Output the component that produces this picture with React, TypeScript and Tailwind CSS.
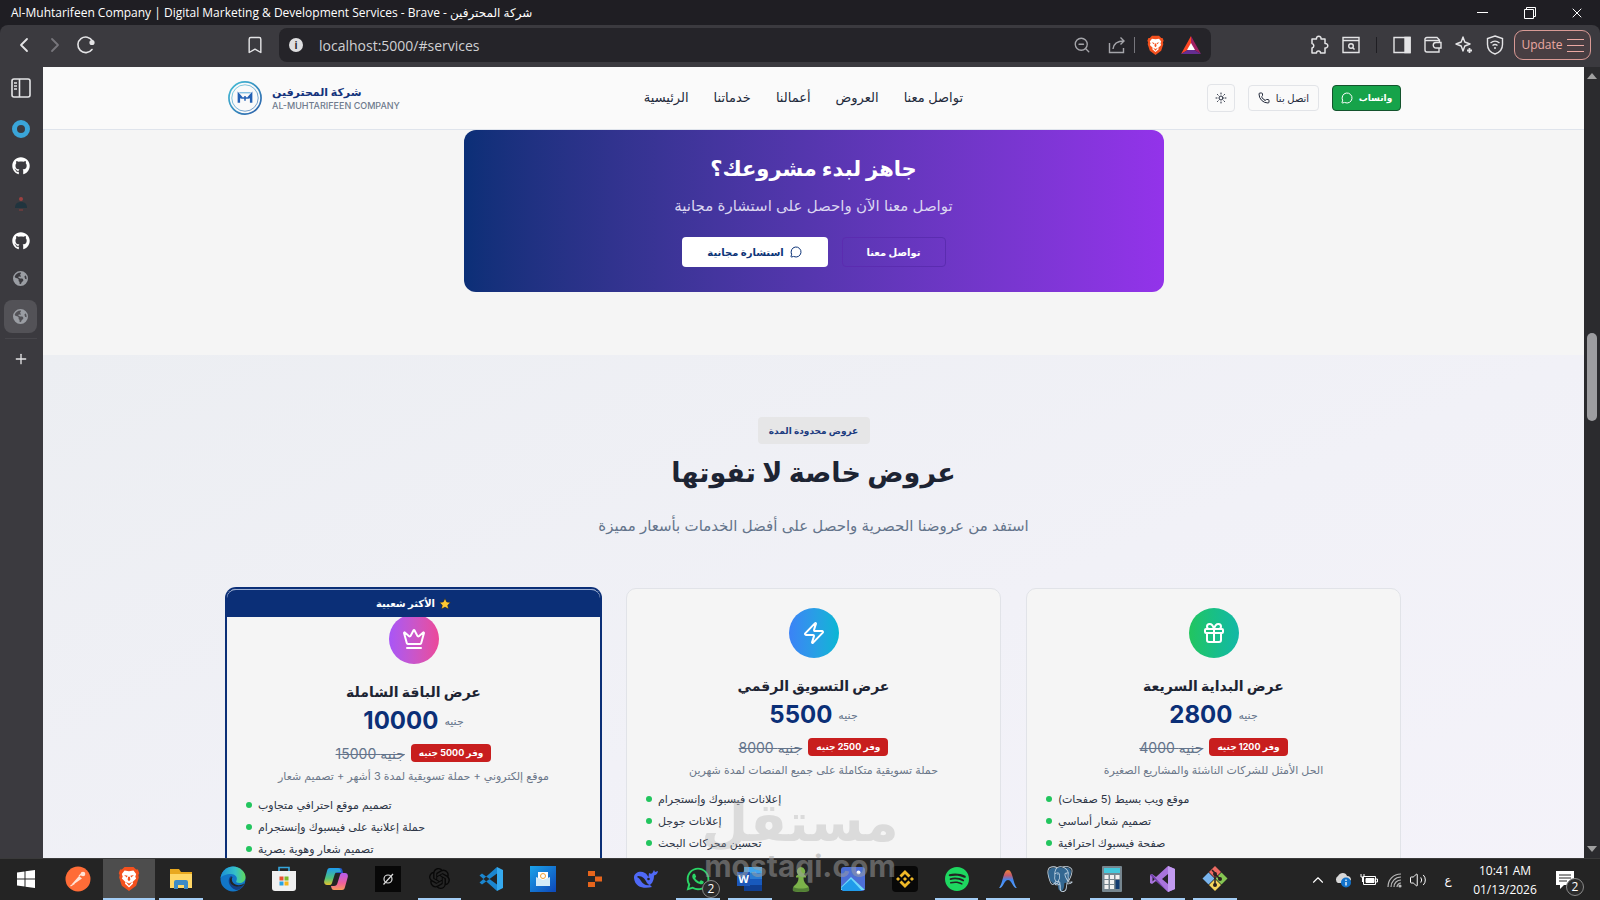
import type { ReactNode } from 'react';
import {
  Bookmark,
  ChevronLeft,
  ChevronRight,
  ChevronUp,
  Crown,
  Gift,
  MessageCircle,
  Phone,
  Plus,
  Sun,
  Volume2,
  X,
  Zap,
  ZoomOut,
} from 'lucide-react';
import { FaGithub, FaWhatsapp } from 'react-icons/fa';
import { FaEarthAmericas } from 'react-icons/fa6';
import { SiBinance, SiOpenai, SiPostgresql, SiPostman, SiSpotify } from 'react-icons/si';

const BraveLion = ({ className }: { className: string }) => (
  <svg viewBox="0 0 24 28" className={className} aria-hidden="true">
    <path d="M7 1h10l3 3 2 0 1.500 4-1 2 .5 3-3 9-8 6-8-6-3-9 .5-3-1-2L2 4l2 0z" fill="#f4511e" />
    <path
      d="M7 5l5 1 5-1 3 4-1 3 1 2-4 4 .5 2L12 24l-4.500-4 .5-2-4-4 1-2-1-3z"
      fill="#fff"
    />
    <path d="M6.500 10l4 1-1 2zM17.500 10l-4 1 1 2zM11 12h2l.5 3.500L12 17l-1.500-1.500zM8.500 18l3.500 1.500 3.500-1.500-3.500 4z" fill="#f4511e" />
  </svg>
);

const tabs = [
  { label: 'Blue ring', icon: <span className="h-[18px] w-[18px] rounded-full border-[5px] border-[#3aa5d8]" /> },
  { label: 'GitHub', icon: <FaGithub className="h-[18px] w-[18px] text-white" /> },
  {
    label: 'Project',
    icon: (
      <svg viewBox="0 0 16 16" className="h-4 w-4">
        <circle cx="8" cy="3" r="2" fill="#9c4040" />
        <path d="M2 12c0-4 2-6 6-6s6 2 6 6z" fill="#20343e" />
        <path d="M6 14h4" stroke="#8f3c3c" />
      </svg>
    ),
  },
  { label: 'GitHub', icon: <FaGithub className="h-[18px] w-[18px] text-white" /> },
  { label: 'Local site', icon: <FaEarthAmericas className="h-[15px] w-[15px] text-[#9a9da3]" /> },
  { label: 'Local site', active: true, icon: <FaEarthAmericas className="h-[15px] w-[15px] text-[#9a9da3]" /> },
];

const navLinks = ['الرئيسية', 'خدماتنا', 'أعمالنا', 'العروض', 'تواصل معنا'];

const offers = [
  {
    title: 'عرض الباقة الشاملة',
    price: '10000',
    oldPrice: '15000 جنيه',
    save: 'وفر 5000 جنيه',
    description: 'موقع إلكتروني + حملة تسويقية لمدة 3 أشهر + تصميم شعار',
    features: ['تصميم موقع احترافي متجاوب', 'حملة إعلانية على فيسبوك وإنستجرام', 'تصميم شعار وهوية بصرية'],
    icon: Crown,
    gradient: 'from-[#a855f7] to-[#ec4899]',
    popular: true,
  },
  {
    title: 'عرض التسويق الرقمي',
    price: '5500',
    oldPrice: '8000 جنيه',
    save: 'وفر 2500 جنيه',
    description: 'حملة تسويقية متكاملة على جميع المنصات لمدة شهرين',
    features: ['إعلانات فيسبوك وإنستجرام', 'إعلانات جوجل', 'تحسين محركات البحث'],
    icon: Zap,
    gradient: 'from-[#3b82f6] to-[#06b6d4]',
    popular: false,
  },
  {
    title: 'عرض البداية السريعة',
    price: '2800',
    oldPrice: '4000 جنيه',
    save: 'وفر 1200 جنيه',
    description: 'الحل الأمثل للشركات الناشئة والمشاريع الصغيرة',
    features: ['موقع ويب بسيط (5 صفحات)', 'تصميم شعار أساسي', 'صفحة فيسبوك احترافية'],
    icon: Gift,
    gradient: 'from-[#22c55e] to-[#14b8a6]',
    popular: false,
  },
];

const TitleBar = () => (
  <div className="flex h-[25px] shrink-0 items-center justify-between bg-[#1f1e23] pl-[11px] text-white">
    <span className="font-['Open_Sans','DejaVu_Sans',sans-serif] text-[12px]">
      Al-Muhtarifeen Company | Digital Marketing &amp; Development Services - Brave - شركة المحترفين
    </span>
    <div className="flex h-full">
      <button aria-label="Minimize" className="flex w-[47px] items-center justify-center">
        <span className="h-px w-[11px] bg-white" />
      </button>
      <button aria-label="Restore" className="flex w-[47px] items-center justify-center">
        <svg viewBox="0 0 12 12" className="h-3 w-3" fill="none" stroke="#fff">
          <path d="M.5 2.500h9v9h-9zM2.500 2V.5h9v9H10" />
        </svg>
      </button>
      <button aria-label="Close" className="flex w-[47px] items-center justify-center">
        <X className="h-4 w-4" strokeWidth={1.5} />
      </button>
    </div>
  </div>
);

const Toolbar = () => (
  <div className="flex h-[42px] shrink-0 items-center rounded-t-lg bg-[#3b3a3f] pb-0.5 font-['Open_Sans',sans-serif] text-[#e4e4e6]">
    <div className="flex w-[279px] shrink-0 items-center pl-2">
      <button aria-label="Back" className="flex w-[31px] justify-center">
        <ChevronLeft className="h-6 w-6" strokeWidth={1.8} />
      </button>
      <button aria-label="Forward" className="flex w-[31px] justify-center text-[#77767c]">
        <ChevronRight className="h-6 w-6" strokeWidth={1.8} />
      </button>
      <button aria-label="Reload" className="flex w-[31px] justify-center">
        <svg viewBox="0 0 20 20" className="h-5 w-5" fill="none" stroke="currentColor" strokeWidth="1.6">
          <path d="M16 14.500A7.800 7.800 0 1 1 16.500 6" strokeLinecap="round" />
          <circle cx="16" cy="7.500" r="1.800" fill="currentColor" />
        </svg>
      </button>
      <button aria-label="Bookmark" className="ml-auto flex w-12 justify-center">
        <Bookmark className="h-5 w-5" strokeWidth={1.7} />
      </button>
    </div>

    <div className="flex h-[34px] min-w-0 flex-1 items-center rounded-lg bg-[#252429] pr-1">
      <span className="ml-2.5 flex h-[14px] w-[14px] shrink-0 items-center justify-center rounded-full bg-[#dedee0] text-[10px] leading-none font-bold text-[#252429]">
        i
      </span>
      <input
        aria-label="Address"
        defaultValue="localhost:5000/#services"
        className="ml-4 min-w-0 flex-1 bg-transparent text-[14px] text-[#d0d0d3] outline-none"
      />
      <button aria-label="Zoom out" className="flex w-9 justify-center text-[#a5a5aa]">
        <ZoomOut className="h-[18px] w-[18px]" strokeWidth={1.8} />
      </button>
      <button aria-label="Share" className="flex w-[34px] justify-center text-[#a5a5aa]">
        <svg viewBox="0 0 18 18" className="h-[18px] w-[18px]" fill="none" stroke="currentColor" strokeWidth="1.400">
          <path d="M1.500 7v9.500h14V12M5 13c.5-5 3-8 11-8M12.500 1.500L16 5l-3.500 3.500" />
        </svg>
      </button>
      <span className="h-4 w-px bg-[#77767c]" />
      <button aria-label="Brave Shields" className="flex w-10 justify-center">
        <BraveLion className="h-5 w-[17px]" />
      </button>
      <button aria-label="Brave Rewards" className="flex w-8 justify-center">
        <svg viewBox="0 0 20 18" className="h-[18px] w-5">
          <path d="M10 0L0 18l10-6z" fill="#ff4724" />
          <path d="M10 0l10 18-10-6z" fill="#9e1f63" />
          <path d="M0 18h20l-10-6z" fill="#662d91" />
          <path d="M10 7l-4 7h8z" fill="#fff" />
        </svg>
      </button>
    </div>

    <div className="flex w-[389px] shrink-0 items-center justify-end pr-[9px]">
      <button aria-label="Extensions" className="flex w-8 justify-center">
        <svg viewBox="0 0 20 20" className="h-5 w-5" fill="none" stroke="currentColor" strokeWidth="1.500" strokeLinejoin="round">
          <path d="M3 4h4.500a2.300 2.300 0 1 1 4.500 0h4v4.500a2.300 2.300 0 1 1 0 4.500v5h-4.500a2 2 0 0 0-4 0H3v-5a2.300 2.300 0 0 0 0-4.500z" />
        </svg>
      </button>
      <button aria-label="Search tabs" className="flex w-8 justify-center">
        <svg viewBox="0 0 18 18" className="h-[18px] w-[18px]" fill="none" stroke="currentColor" strokeWidth="1.400">
          <path d="M1 1.500h16v15H1zM1 4.500h16" />
          <circle cx="9" cy="10" r="2.300" />
          <path d="M10.500 11.500l2 2" />
        </svg>
      </button>
      <span className="mx-[9px] h-4 w-px bg-[#1f1e23]" />
      <button aria-label="Sidebar" className="flex w-[31px] justify-center">
        <svg viewBox="0 0 18 18" className="h-[18px] w-[18px]" fill="none" stroke="currentColor" strokeWidth="1.400">
          <path d="M1 1.500h16v15H1z" />
          <path d="M12 1.500h5v15h-5z" fill="currentColor" />
        </svg>
      </button>
      <button aria-label="Wallet" className="flex w-[31px] justify-center">
        <svg viewBox="0 0 18 18" className="h-[18px] w-[18px]" fill="none" stroke="currentColor" strokeWidth="1.400">
          <path d="M15.500 6V4L13 1.500H3A2 2 0 0 0 1 4v10a2 2 0 0 0 2 2h12V12M1 4.500h14.500" />
          <path d="M17 6.500h-5a2.700 2.700 0 0 0 0 5.500h5z" />
        </svg>
      </button>
      <button aria-label="Leo AI" className="flex w-[31px] justify-center">
        <svg viewBox="0 0 18 18" className="h-[18px] w-[18px]" fill="none" stroke="currentColor" strokeWidth="1.400">
          <path d="M8 1l1.800 5L15 8l-5.200 2L8 15l-1.800-5L1 8l5.200-2z" strokeLinejoin="round" />
          <path d="M14.500 12v5M12 14.500h5" strokeWidth="1.800" />
        </svg>
      </button>
      <button aria-label="VPN" className="mr-1 flex w-[31px] justify-center">
        <svg viewBox="0 0 18 20" className="h-5 w-[18px]" fill="none" stroke="currentColor" strokeWidth="1.400">
          <path d="M9 1l7.500 2.500v6c0 5-3 8-7.500 9.500C4.500 17.500 1.500 14.500 1.500 9.500v-6z" />
          <path d="M4.500 8c3-2.500 6-2.500 9 0M6.500 10.500c2-1.500 3-1.500 5 0" />
          <circle cx="9" cy="13" r="1" fill="currentColor" stroke="none" />
        </svg>
      </button>
      <button className="flex h-[30px] w-[77px] items-center justify-center gap-1 rounded-[9px] border border-[#d99a95] bg-[#483e42] text-[12px] text-[#eba9a3]">
        Update
        <span className="flex w-[17px] flex-col gap-[5px]">
          <span className="h-px bg-[#eba9a3]" />
          <span className="h-px bg-[#eba9a3]" />
          <span className="h-px bg-[#eba9a3]" />
        </span>
      </button>
    </div>
  </div>
);

const Sidebar = () => (
  <aside className="flex w-[43px] shrink-0 flex-col items-center bg-[#3b3a3f] pr-0.5 text-[#e4e4e6]">
    <button aria-label="Toggle tabs" className="mt-[11px] flex h-8 w-8 items-start justify-center">
      <svg viewBox="0 0 20 20" className="h-5 w-5" fill="none" stroke="currentColor" strokeWidth="1.600">
        <rect x="1" y="1" width="18" height="18" rx="2" />
        <path d="M8.500 1v18" />
        <path d="M3 5h3M3 8h3M3 11h3" />
      </svg>
    </button>
    <div className="flex h-[225px] flex-col">
      {tabs.map((tab, i) => (
        <div key={i} className="flex flex-1 items-center">
          <button
            aria-label={tab.label}
            className={`flex h-[33px] w-[33px] items-center justify-center rounded-lg ${tab.active ? 'bg-[#535257]' : ''}`}
          >
            {tab.icon}
          </button>
        </div>
      ))}
    </div>
    <hr className="mt-[3px] w-8 border-[#47464b]" />
    <button aria-label="New tab" className="mt-3 flex justify-center">
      <Plus className="h-4 w-4" strokeWidth={2} />
    </button>
  </aside>
);

const SiteHeader = () => (
  <header className="h-[63px] border-b border-[#dfe4ec] bg-[#fafafa]">
    <div className="mx-auto flex h-full w-full max-w-[1175px] items-center justify-between">
      <a href="#home" className="flex items-center gap-2.5">
        <svg viewBox="0 0 36 36" className="ml-0.5 h-[34px] w-[34px]" fill="none">
          <defs>
            <linearGradient id="ring" x1="0" y1="0" x2="1" y2="1">
              <stop offset="0" stopColor="#45c1d8" />
              <stop offset="1" stopColor="#2b5ca8" />
            </linearGradient>
          </defs>
          <circle cx="18" cy="18" r="17" stroke="url(#ring)" strokeWidth="1.800" />
          <circle cx="18" cy="18" r="14" stroke="url(#ring)" strokeWidth=".7" />
          <path d="M11.500 23v-8.500l3 3.500M24.500 23v-8.500l-3 3.500" stroke="#2461b5" strokeWidth="2.600" />
          <path d="M14 18h8M18 16v5" stroke="#2461b5" strokeWidth="1.600" />
          <path d="M12 12.500h12" stroke="#4ba3d6" />
        </svg>
        <span className="flex flex-col">
          <span className="text-[11px] leading-4 font-bold text-[#13337c]">شركة المحترفين</span>
          <span className="text-[9px] leading-3 font-medium text-[#6f7a8d]">AL-MUHTARIFEEN COMPANY</span>
        </span>
      </a>
      <nav className="flex gap-[25px] text-[13px] font-medium text-[#22293a]">
        {navLinks.map((link) => (
          <a key={link} href="#services">
            {link}
          </a>
        ))}
      </nav>
      <div className="flex items-center gap-[13px] text-[10px] font-medium">
        <button
          aria-label="Toggle theme"
          className="flex h-7 w-7 items-center justify-center rounded border border-[#e2e4e8]"
        >
          <Sun className="h-3 w-3 text-[#22293a]" />
        </button>
        <button className="flex h-[26px] w-[71px] items-center justify-center gap-1.5 rounded border border-[#e2e4e8] text-[#22293a]">
          <Phone className="h-3 w-3" />
          اتصل بنا
        </button>
        <button className="flex h-[26px] w-[69px] items-center justify-center gap-1.5 rounded border border-[#14532d] bg-[#16a34a] text-[9px] font-bold text-white">
          <MessageCircle className="h-3 w-3" />
          واتساب
        </button>
      </div>
    </div>
  </header>
);

const CallToAction = () => (
  <section className="bg-[#f5f5f5] pb-[63px]">
    <div className="mx-auto flex h-[162px] w-full max-w-[700px] flex-col items-center rounded-xl bg-linear-to-r from-[#0b2f77] to-[#9333ea] pt-[23px] text-white">
      <h2 className="text-[21px] leading-8 font-bold">جاهز لبدء مشروعك؟</h2>
      <p className="mt-[9px] text-[15px] leading-6 text-[#dad5f0]">تواصل معنا الآن واحصل على استشارة مجانية</p>
      <div className="mt-[19px] flex gap-3.5 text-[10px] font-bold">
        <button className="flex h-[30px] w-[146px] items-center justify-center gap-1.5 rounded bg-white text-[#0d3478]">
          استشارة مجانية
          <MessageCircle className="h-3 w-3" />
        </button>
        <button className="h-[30px] w-[104px] rounded border border-[#5b2cb0]">تواصل معنا</button>
      </div>
    </div>
  </section>
);

const OfferCard = ({ offer }: { offer: (typeof offers)[number] }) => {
  const Icon = offer.icon;

  return (
    <article
      className={`relative flex h-[420px] flex-col items-center rounded-[10px] border bg-[#f5f5f5] ${
        offer.popular ? 'border-[#0b2f77] pt-[25px] ring-1 ring-[#0b2f77]' : 'border-[#e1e3e8] pt-[19px]'
      }`}
    >
      <div className={`flex h-[50px] w-[50px] items-center justify-center rounded-full bg-linear-to-r ${offer.gradient}`}>
        <Icon className="h-6 w-6 text-white" />
      </div>
      {offer.popular && (
        <div className="absolute inset-x-0 top-0 flex h-7 items-center justify-center gap-1 rounded-t-[9px] border-t border-[#9db0d4] bg-[#0b2f77] text-[10px] font-bold text-white">
          الأكثر شعبية
          <svg viewBox="0 0 12 12" className="h-3 w-3">
            <path d="M6 .5l1.700 3.500 3.800.5-2.800 2.600.7 3.900L6 9.100 2.600 11l.7-3.900L.5 4.500 4.300 4z" fill="#ffc933" stroke="#222" strokeWidth=".5" />
          </svg>
        </div>
      )}
      <h3 className="mt-3.5 text-[14px] leading-7 font-bold text-[#1d2433]">{offer.title}</h3>
      <div className="flex h-[30px] items-center gap-1.5">
        <span className="text-[24px] leading-none font-bold text-[#0b2f77]">{offer.price}</span>
        <span className="text-[11px] text-[#64748b]">جنيه</span>
      </div>
      <div className="mt-2 flex h-[18px] items-center gap-1.5">
        <s className="text-[14px] text-[#64748b]">{offer.oldPrice}</s>
        <span className="flex h-[18px] items-center rounded bg-[#c81e1e] px-2 text-[9px] font-bold text-white">
          {offer.save}
        </span>
      </div>
      <p className="mt-1 text-[11px] leading-5 text-[#6b7789]">{offer.description}</p>
      <ul className="mt-2 self-stretch pl-[19px] text-[11px] leading-[22px] text-[#2c3445]">
        {offer.features.map((feature) => (
          <li key={feature} className="flex items-center gap-1.5">
            <span className="h-1.5 w-1.5 rounded-full bg-[#22c55e]" />
            {feature}
          </li>
        ))}
      </ul>
    </article>
  );
};

const Offers = () => (
  <section className="bg-linear-to-br from-[#eceef2] via-[#f1f1f7] to-[#f5f3fa] pt-[62px]">
    <div className="mx-auto flex w-full max-w-[1175px] flex-col items-center">
      <span className="flex h-[27px] w-[112px] items-center justify-center rounded bg-[#e6e6e7] text-[9px] font-bold text-[#1d3c80]">
        عروض محدودة المدة
      </span>
      <h2 className="mt-2 text-[27px] leading-[42px] font-bold text-[#1d2433]">عروض خاصة لا تفوتها</h2>
      <p className="mt-5 text-[15px] leading-6 text-[#64748b]">
        استفد من عروضنا الحصرية واحصل على أفضل الخدمات بأسعار مميزة
      </p>
      <div className="mt-[50px] grid w-full grid-cols-3 gap-[25px]">
        {offers.map((offer) => (
          <OfferCard key={offer.title} offer={offer} />
        ))}
      </div>
    </div>
  </section>
);

const Scrollbar = () => (
  <div className="flex w-4 shrink-0 flex-col items-center justify-between bg-[#2b2b2e] py-1.5 text-[#a0a0a0]">
    <svg viewBox="0 0 10 6" className="h-1.5 w-2.5" fill="currentColor">
      <path d="M5 0l5 6H0z" />
    </svg>
    <div className="mt-[254px] mb-auto h-[88px] w-2.5 rounded-full bg-[#9d9da0]" />
    <svg viewBox="0 0 10 6" className="h-1.5 w-2.5" fill="currentColor">
      <path d="M0 0h10L5 6z" />
    </svg>
  </div>
);

type TaskbarApp = { name: string; icon: ReactNode; open?: boolean; active?: boolean; count?: number };

const apps: TaskbarApp[] = [
  {
    name: 'Start',
    icon: (
      <svg viewBox="0 0 18 18" className="h-[18px] w-[18px]" fill="#fff">
        <path d="M0 2.500l7.500-1v7H0zM8.500 1.300L18 0v8.500H8.500zM0 9.500h7.500v7l-7.500-1zM8.500 9.500H18V18l-9.500-1.300z" />
      </svg>
    ),
  },
  {
    name: 'Postman',
    icon: (
      <svg viewBox="0 0 26 26" className="h-[26px] w-[26px]">
        <circle cx="13" cy="13" r="12.500" fill="#ff6c37" />
        <path d="M7 18l7-8 3 2.500-8 5.500z" fill="#ffe3d6" />
        <path d="M5.500 20l4-2.500M14 10l3.500-3" stroke="#ffe3d6" strokeWidth="1.300" />
        <circle cx="18" cy="8" r="2.300" fill="#ffe3d6" />
      </svg>
    ),
  },
  { name: 'Brave', active: true, open: true, icon: <BraveLion className="h-[25px] w-[22px]" /> },
  {
    name: 'File Explorer',
    open: true,
    icon: (
      <svg viewBox="0 0 24 22" className="h-[22px] w-6">
        <path d="M1 1h9l2 3h11v16H1z" fill="#e8a81f" />
        <path d="M1 6h22v14H1z" fill="#ffd766" />
        <path d="M5 21v-7a2 2 0 0 1 2-2h10a2 2 0 0 1 2 2v7h-4v-4H9v4z" fill="#3c8ac6" />
      </svg>
    ),
  },
  {
    name: 'Edge',
    icon: (
      <svg viewBox="0 0 26 26" className="h-[26px] w-[26px]">
        <defs>
          <linearGradient id="edge" x1="0" x2="1">
            <stop offset="0" stopColor="#1b8fd8" />
            <stop offset=".6" stopColor="#35c1c8" />
            <stop offset="1" stopColor="#5fd85a" />
          </linearGradient>
        </defs>
        <circle cx="13" cy="13" r="12.500" fill="#1276c8" />
        <path d="M.5 12C2 4 8 .5 13 .5 20 .5 25.500 6 25.500 11c0 4-3 6-6 6-3 0-4-1-3-2.500C18 11 15 8 11 8 6 8 2 10 .5 12z" fill="url(#edge)" />
        <path d="M11 10c-4 3-3 11 5 14 3 0 6-2 8-5-6 3-13 0-13-5 0-1 .5-2 1.500-3z" fill="#143f85" />
        <path d="M12.500 11c-1.500 2-.5 6 3 7.500 2.500 1 6 1 8.500-1 .5 0-.5 1.500-1 2-7 3-14-1-13-6 .5-1.500 1.500-2.500 2.500-2.500z" fill="#242424" />
      </svg>
    ),
  },
  {
    name: 'Microsoft Store',
    icon: (
      <svg viewBox="0 0 24 26" className="h-[26px] w-6">
        <path d="M7 5V1.500h10V5" fill="none" stroke="#35a6dc" strokeWidth="1.600" />
        <path d="M0 5h24v17a3 3 0 0 1-3 3H3a3 3 0 0 1-3-3z" fill="#f0f0f0" />
        <path d="M7.500 10.500h4v4h-4z" fill="#e8502f" />
        <path d="M12.500 10.500h4v4h-4z" fill="#7db928" />
        <path d="M7.500 15.500h4v4h-4z" fill="#28a3e2" />
        <path d="M12.500 15.500h4v4h-4z" fill="#f6b519" />
      </svg>
    ),
  },
  {
    name: 'Copilot',
    icon: (
      <svg viewBox="0 0 24 24" className="h-6 w-6">
        <defs>
          <linearGradient id="copilotA" x1="0" y1="0" x2="0" y2="1">
            <stop offset="0" stopColor="#1e9bf0" />
            <stop offset=".6" stopColor="#4fc37c" />
            <stop offset="1" stopColor="#e5c22c" />
          </linearGradient>
          <linearGradient id="copilotB" x1="0" y1="0" x2="0" y2="1">
            <stop offset="0" stopColor="#b45cf0" />
            <stop offset=".6" stopColor="#f0609a" />
            <stop offset="1" stopColor="#f79a5c" />
          </linearGradient>
        </defs>
        <path d="M13 1h3c2 0 2.500 1.500 3 5h-7z" fill="#2457c9" />
        <path d="M6 1h8c2 0 2.500 1.500 3 4h-3c-2 0-3 1-3.500 3L8 16c-.5 1.500-1 2-3 2H3c-2.500 0-3.500-2-2.500-5L3 4c.5-2 1-3 3-3z" fill="url(#copilotA)" />
        <path d="M18 23h-8c-2 0-2.500-1.500-3-4h3c2 0 3-1 3.500-3L16 8c.5-1.500 1-2 3-2h2c2.500 0 3.500 2 2.500 5L21 20c-.5 2-1 3-3 3z" fill="url(#copilotB)" />
      </svg>
    ),
  },
  {
    name: 'Grok',
    icon: (
      <svg viewBox="0 0 26 26" className="h-[26px] w-[26px]">
        <path d="M0 0h26v26H0z" fill="#080808" />
        <circle cx="13" cy="13" r="4" fill="none" stroke="#ddd" strokeWidth="1.200" />
        <path d="M8.500 18.500L18 8" stroke="#ddd" strokeWidth="1.200" />
      </svg>
    ),
  },
  { name: 'ChatGPT', open: true, icon: <SiOpenai className="h-[21px] w-[21px] text-[#080808]" /> },
  {
    name: 'VS Code',
    icon: (
      <svg viewBox="0 0 26 26" className="h-[26px] w-[26px]">
        <path d="M19 1l6 3v18l-6 3z" fill="#35a9ee" />
        <path d="M19 1L1.500 16.500l2.500 2L19 7.500zM19 25L1.500 9.500l2.500-2L19 18.500z" fill="#1b86cf" />
      </svg>
    ),
  },
  {
    name: 'Mail box',
    icon: (
      <svg viewBox="0 0 26 26" className="h-[26px] w-[26px]">
        <defs>
          <linearGradient id="box" x1="0" y1="0" x2="1" y2="1">
            <stop offset="0" stopColor="#1ba3ea" />
            <stop offset="1" stopColor="#0d47b8" />
          </linearGradient>
        </defs>
        <path d="M0 0h26v26H0z" fill="url(#box)" />
        <path d="M8 6h10v8H8z" fill="#fff" />
        <circle cx="13" cy="10" r="2.500" fill="none" stroke="#f0a030" />
        <path d="M6 11l7 3 7-3v9H6z" fill="#d3ebf8" />
      </svg>
    ),
  },
  {
    name: 'Replit',
    icon: (
      <svg viewBox="0 0 14 16" className="h-4 w-3.5" fill="#e7651c">
        <path d="M0 0h7v5H0zM7 5.500h7v5H7zM0 11h7v5H0z" />
      </svg>
    ),
  },
  {
    name: 'DeepSeek',
    icon: (
      <svg viewBox="0 0 24 20" className="h-5 w-6">
        <path d="M15 4c2 1 3 1 4-1l1-2 1 2 3-1c-.5 3-2 4-4 4.500 0 5-2 8-4 9.500l2 2c-7 2-17 1-18-9C-.5 4 6 1 11 4c2 1 2 2 3.500 4z" fill="#4f69f6" />
        <path d="M4 7c5 0 7 3 9 7 1 1 2 2 3 2-4 1-7-1-9-4-1-2-2-3-4-4z" fill="#242424" />
        <circle cx="14.500" cy="10" r="1.300" fill="#242424" />
      </svg>
    ),
  },
  { name: 'WhatsApp', open: true, count: 2, icon: <FaWhatsapp className="h-[26px] w-[26px] text-[#2bd566]" /> },
  {
    name: 'Word',
    open: true,
    icon: (
      <svg viewBox="0 0 25 24" className="h-6 w-[25px]">
        <path d="M7 0h18v6H7z" fill="#41a5ee" />
        <path d="M7 6h18v6H7z" fill="#2b7cd3" />
        <path d="M7 12h18v6H7z" fill="#185abd" />
        <path d="M7 18h18v6H7z" fill="#103f91" />
        <path d="M0 5h13v14H0z" fill="#1d57b8" />
        <text x="6.500" y="16" fontSize="11" fontWeight="700" fill="#fff" textAnchor="middle">W</text>
      </svg>
    ),
  },
  {
    name: 'Chess',
    icon: (
      <svg viewBox="0 0 18 26" className="h-[26px] w-[18px]">
        <path d="M9 1a4.500 4.500 0 0 1 3 7.500l2 1.500v1.500h-2.500c0 4 1.500 6 4 8 1.500 1.500 2 3 1.500 5.500-5 1.500-11 1.500-16 0-.5-2.500 0-4 1.500-5.500 2.500-2 4-4 4-8H4V10l2-1.500A4.500 4.500 0 0 1 9 1z" fill="#7bb24a" />
        <path d="M1 21c5 2 11 2 16 0v4c-5 1.300-11 1.300-16 0z" fill="#538136" />
      </svg>
    ),
  },
  {
    name: 'Photos',
    icon: (
      <svg viewBox="0 0 24 24" className="h-6 w-6">
        <rect width="24" height="24" rx="3" fill="#4d6fd6" />
        <path d="M0 20L10 10l14 13H0z" fill="#6fd8fa" />
        <path d="M0 21l10-9 11 12H2z" fill="#209bea" />
        <circle cx="17.500" cy="5.500" r="2" fill="#fff" />
      </svg>
    ),
  },
  {
    name: 'Binance',
    icon: (
      <span className="flex h-[26px] w-[26px] items-center justify-center rounded bg-[#080808]">
        <SiBinance className="h-[18px] w-[18px] text-[#f0b928]" />
      </span>
    ),
  },
  { name: 'Spotify', open: true, icon: <SiSpotify className="h-6 w-6 text-[#1ed760]" /> },
  {
    name: 'Antigravity',
    open: true,
    icon: (
      <svg viewBox="0 0 24 24" className="h-6 w-6">
        <defs>
          <linearGradient id="arch" x1="0" y1="0" x2="0" y2="1">
            <stop offset="0" stopColor="#f0843a" />
            <stop offset=".3" stopColor="#c35a6e" />
            <stop offset=".55" stopColor="#3f86f0" />
            <stop offset="1" stopColor="#5aa2ff" />
          </linearGradient>
        </defs>
        <path d="M3 21C7 17 7 3 12 3s5 14 9 18c-4 1-5-8-9-8s-5 9-9 8z" fill="url(#arch)" />
      </svg>
    ),
  },
  {
    name: 'PostgreSQL',
    icon: (
      <svg viewBox="0 0 24 24" className="h-[26px] w-[26px]">
        <path d="M1 7C1 2 5 1 9 2c2-1 4-1 6 0 5-2 8 1 7 5-1 4-3 6-3 8l-3 1c0 4-1 7-3 7s-3-2-3-6H7C4 16 1 11 1 7z" fill="#336791" />
        <SiPostgresql className="text-[#c8d8e6]" size={24} />
      </svg>
    ),
  },
  {
    name: 'Calculator',
    open: true,
    icon: (
      <svg viewBox="0 0 20 26" className="h-[26px] w-5">
        <rect width="20" height="26" rx="1" fill="#76868f" />
        <path d="M2 2h16v5H2z" fill="#44c8dc" />
        <path d="M2.500 9h4v4h-4zM8 9h4v4H8zM13.500 9h4v4h-4zM2.500 14h4v4h-4zM8 14h4v4H8zM2.500 19h4v4h-4zM8 19h4v4H8z" fill="#f1f1f1" />
        <path d="M13.500 14h4v9h-4z" fill="#123c70" />
      </svg>
    ),
  },
  {
    name: 'Visual Studio',
    open: true,
    icon: (
      <svg viewBox="0 0 26 26" className="h-[26px] w-[26px]">
        <path d="M18 0l7 3v20l-7 3L6 15l-4 3-2-1V9l2-1 4 3zM18 8l-6 5 6 5zM2.500 10.500v5L5 13z" fill="#a974dc" fillRule="evenodd" />
        <path d="M18 0l7 3v20l-7 3z" fill="#c29af0" />
        <path d="M0 9l2-1 16 18-4-3.700z" fill="#7341ad" />
      </svg>
    ),
  },
  {
    name: 'Git',
    open: true,
    icon: (
      <svg viewBox="0 0 26 26" className="h-[26px] w-[26px]">
        <path d="M13 0l6 6-6 6-6-6z" fill="#ec6a62" />
        <path d="M6.500 6.500l6 6-6 6-6-6z" fill="#79b5ee" />
        <path d="M19.500 6.500l6 6-6 6-6-6z" fill="#85c552" />
        <path d="M13 13l6 6-6 6-6-6z" fill="#f6d45c" />
        <path d="M10 4l3 3v12M13 8l5 5" fill="none" stroke="#2a2020" strokeWidth="1.500" />
        <circle cx="13" cy="8" r="2" fill="#2a2020" />
        <circle cx="18" cy="13" r="2" fill="#2a2020" />
        <circle cx="13" cy="19" r="2" fill="#2a2020" />
      </svg>
    ),
  },
];

const Taskbar = () => (
  <footer className="flex h-[42px] shrink-0 items-stretch justify-between border-t border-[#3a3a3a] bg-[#242424] font-['Open_Sans','DejaVu_Sans',sans-serif] text-white">
    <div className="flex w-[1241px] min-w-0">
      {apps.map((app) => (
        <button
          key={app.name}
          aria-label={app.name}
          className={`relative flex flex-1 items-center justify-center pb-0.5 ${app.active ? 'bg-[#4d4d4d]' : ''}`}
        >
          {app.icon}
          {app.count && (
            <span className="absolute right-1 bottom-0.5 flex h-[18px] w-[18px] items-center justify-center rounded-full border border-[#8a8a8a] bg-[#2b2b2b] text-[12px]">
              {app.count}
            </span>
          )}
          {app.open && (
            <span className={`absolute bottom-0 h-0.5 bg-[#a3cdf5] ${app.active ? 'inset-x-0' : 'inset-x-1'}`} />
          )}
        </button>
      ))}
    </div>
    <div className="flex items-center">
      <button aria-label="Hidden icons" className="flex w-6 justify-center">
        <ChevronUp className="h-[18px] w-[18px]" strokeWidth={1.5} />
      </button>
      <button aria-label="OneDrive" className="flex w-[26px] justify-center">
        <svg viewBox="0 0 18 16" className="h-4 w-[18px]">
          <path d="M4 11a4 4 0 0 1 0-7c2-4 8-4 9 0 3 0 4 2 4 4l-4 3z" fill="#d8d8d8" />
          <circle cx="12" cy="10.500" r="5" fill="#1273cc" />
          <path d="M12 7.500v1.500M12 10v3.500" stroke="#fff" strokeWidth="1.300" />
        </svg>
      </button>
      <button aria-label="Battery" className="flex w-[25px] justify-center">
        <svg viewBox="0 0 18 14" className="h-3.5 w-[18px]" fill="none" stroke="#fff">
          <path d="M3.500 3.500h12v8h-12zM16 6h1.500v3H16" />
          <path d="M6 5.500h8v4H6z" fill="#fff" />
          <path d="M1 1v3h3V1M2.500 4v5" />
        </svg>
      </button>
      <button aria-label="Network" className="flex w-[25px] justify-center">
        <svg viewBox="0 0 16 16" className="h-4 w-4" fill="none" stroke="#b9b9b9" strokeWidth="1.200">
          <path d="M2 15C2 8 7 2 15 2M5 15c0-5 4-10 10-10M8 15c0-4 3-7 7-7M11 15c0-2 2-4 4-4" />
          <circle cx="14" cy="14" r="1" fill="#fff" />
        </svg>
      </button>
      <button aria-label="Volume" className="flex w-6 justify-center">
        <Volume2 className="h-[18px] w-[18px]" strokeWidth={1.3} />
      </button>
      <button className="w-9 text-[12px]">ع</button>
      <div className="w-[78px] text-center text-[12px] leading-[19px]">
        <div>10:41 AM</div>
        <div>01/13/2026</div>
      </div>
      <button aria-label="Notifications" className="relative flex h-full w-14 items-center justify-center pr-3.5">
        <svg viewBox="0 0 18 18" className="h-[18px] w-[18px]">
          <path d="M0 0h18v14H8l-4 4v-4H0z" fill="#fff" />
          <path d="M3 4h12M3 7h12M3 10h8" stroke="#242424" />
        </svg>
        <span className="absolute right-4 bottom-1 flex h-[18px] w-[18px] items-center justify-center rounded-full border border-[#8a8a8a] bg-[#2b2b2b] text-[12px]">
          2
        </span>
      </button>
    </div>
  </footer>
);

export default function App() {
  return (
    <div className="relative flex h-screen w-full flex-col overflow-hidden bg-[#1f1e23] font-['Inter','DejaVu_Sans',sans-serif]">
      <TitleBar />
      <Toolbar />
      <div className="flex min-h-0 flex-1">
        <Sidebar />
        <main className="min-w-0 flex-1 overflow-hidden bg-[#f5f5f5]">
          <SiteHeader />
          <CallToAction />
          <Offers />
        </main>
        <Scrollbar />
      </div>
      <Taskbar />
      <div className="pointer-events-none absolute bottom-[18px] left-1/2 flex -translate-x-1/2 flex-col items-center font-bold text-[#a0a0a0]">
        <span className="text-[54px] leading-[56px] opacity-30">مستقل</span>
        <span className="text-[30px] leading-8 opacity-50">mostaqi.com</span>
      </div>
    </div>
  );
}
